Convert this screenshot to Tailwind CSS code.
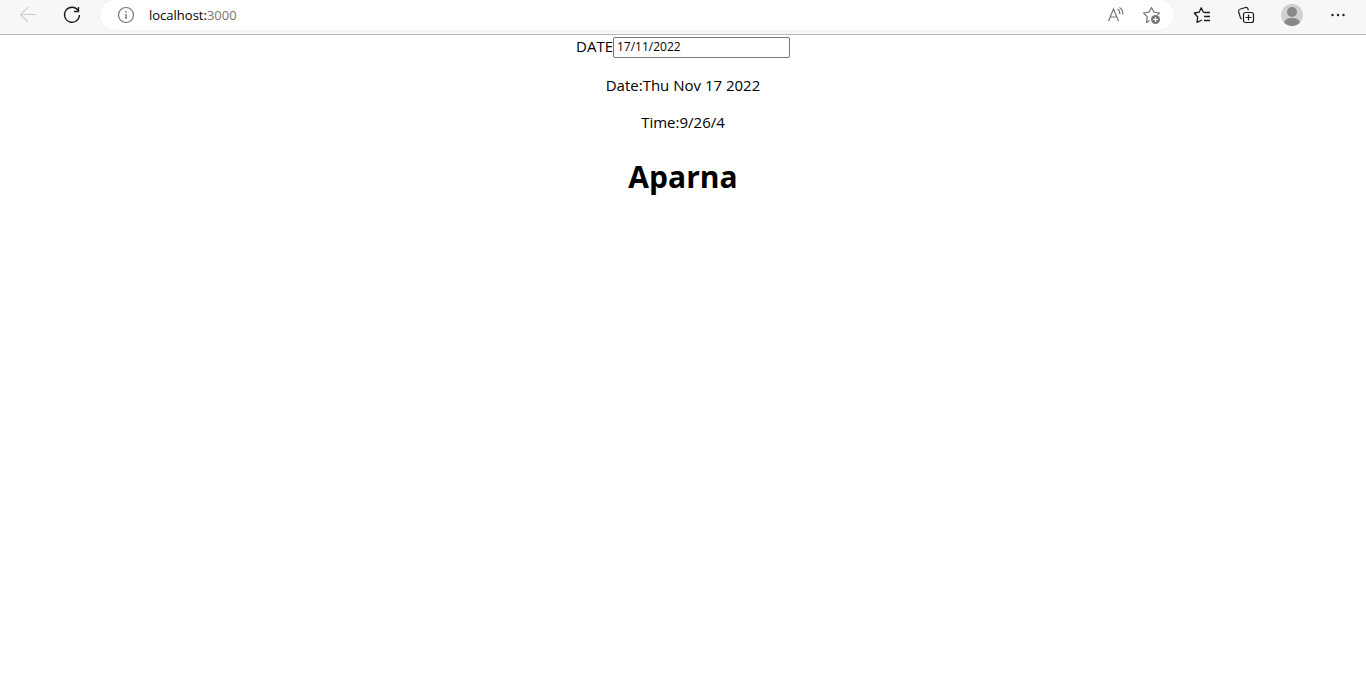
<!DOCTYPE html>
<html lang="en">
<head>
<meta charset="utf-8">
<meta name="viewport" content="width=device-width, initial-scale=1">
<title>localhost:3000</title>
<script src="https://cdn.jsdelivr.net/npm/@tailwindcss/browser@4"></script>
</head>
<body class="min-h-screen bg-white font-['Open_Sans',sans-serif] text-black">
<header class="flex items-start border-b border-[#b9b9b9] bg-[#f7f7f7] pb-1">
  <nav class="flex h-[30px] items-center gap-6 pl-[18px] pr-[18px]" aria-label="Navigation">
    <button type="button" aria-label="Back" class="text-[#cdcdcd]" disabled>
      <svg class="block size-5" viewBox="0 0 20 20" fill="none" stroke="currentColor" stroke-width="1.1"><path d="M18 9.500H2.500M10 2L2.500 9.500L10 17"/></svg>
    </button>
    <button type="button" aria-label="Refresh" class="text-[#1b1b1b]">
      <svg class="block size-5" viewBox="0 0 20 20" fill="none" stroke="currentColor" stroke-width="1.3"><path d="M16.200 5.500A7.500 7.500 0 1 0 17.500 10M16.500 2V6.500H12"/></svg>
    </button>
  </nav>
  <div class="flex h-[30px] min-w-0 flex-1 items-center rounded-full bg-white pl-4 pr-3 shadow-[0_0_3px_rgba(0,0,0,0.07)]">
    <button type="button" aria-label="View site information" class="text-[#757575]">
      <svg class="block size-5" viewBox="0 0 20 20" fill="none" stroke="currentColor" stroke-width="1.200"><circle cx="10" cy="10" r="7.500"/><path d="M10 9V14M10 6V7.500" stroke-width="1.500"/></svg>
    </button>
    <a href="#" class="ml-[13px] flex-1 text-[13px] leading-5">localhost:<span class="text-[#767676]">3000</span></a>
    <button type="button" aria-label="Read aloud" class="mr-4 text-[#767676]">
      <svg class="block size-5" viewBox="0 0 20 20" fill="none" stroke="currentColor" stroke-width="1.200"><path d="M2.500 16L7.500 4L12.500 16M4.200 12H10.800M11.500 4Q14 5.500 13.800 9M13.500 2.500Q17.300 5 16.800 9.500"/></svg>
    </button>
    <button type="button" aria-label="Add to favorites" class="text-[#767676]">
      <svg class="block size-5" viewBox="0 0 20 20" fill="none" stroke="currentColor" stroke-width="1.200" stroke-linejoin="round"><path d="M7.500 15.500L4.500 17.500L5.300 11.800L1.500 8L6.800 7.200L9.500 2.500L12 7.200L17.500 8L15.500 10"/><circle cx="13.500" cy="14.500" r="4.500" fill="currentColor" stroke="none"/><path d="M13.500 12V17M11 14.500H16" stroke="white"/></svg>
    </button>
  </div>
  <div class="flex h-[30px] items-center pl-[18px] pr-[18px] text-[#1b1b1b]">
    <button type="button" aria-label="Favorites">
      <svg class="block size-5" viewBox="0 0 20 20" fill="none" stroke="currentColor" stroke-width="1.300" stroke-linejoin="round"><path d="M10 15L5 17.300L5.700 12L2.300 8L7.200 7.200L9.200 2.800L11.400 7.200L14 7.500M12.500 7.500H18M12 11.500H18M12 15.500H18"/></svg>
    </button>
    <button type="button" aria-label="Collections" class="ml-6">
      <svg class="block size-5" viewBox="0 0 20 20" fill="none" stroke="currentColor" stroke-width="1.200"><rect x="7.500" y="7.500" width="10" height="10" rx="2"/><path d="M12.500 9.500V15.500M9.500 12.500H15.500M6 14Q4.700 13.800 4.300 12.300L2.600 6.500Q2.200 4.800 4 4.200L9.500 2.500Q11.300 2.200 12 4L12.400 5.200"/></svg>
    </button>
    <button type="button" aria-label="Profile" class="ml-6">
      <svg class="block size-6" viewBox="0 0 24 24"><circle cx="12" cy="12" r="11" fill="#d2d0ce"/><circle cx="12" cy="9" r="5" fill="#8a8886"/><path d="M4 19.500Q5 15 12 15T20 19.500A11 11 0 0 1 4 19.500Z" fill="#8a8886"/></svg>
    </button>
    <button type="button" aria-label="Settings and more" class="ml-6">
      <svg class="block size-5" viewBox="0 0 20 20" fill="currentColor"><circle cx="4.500" cy="10" r="1.200"/><circle cx="10" cy="10" r="1.200"/><circle cx="15.500" cy="10" r="1.200"/></svg>
    </button>
  </div>
</header>
<main class="flex flex-col items-center pt-[2px] text-[15px] leading-5">
  <div class="flex items-start">
    <label for="date" class="leading-[18px]">DATE</label>
    <input id="date" type="text" value="17/11/2022" class="h-[21px] w-[177px] rounded-[2px] border border-[#767676] px-[3px] pb-[2px] text-[12px]">
  </div>
  <p class="mt-[17px]">Date:Thu Nov 17 2022</p>
  <p class="mt-[17px]">Time:9/26/4</p>
  <h1 class="mt-6 text-[30px] leading-[42px] font-bold">Aparna</h1>
</main>
</body>
</html>
